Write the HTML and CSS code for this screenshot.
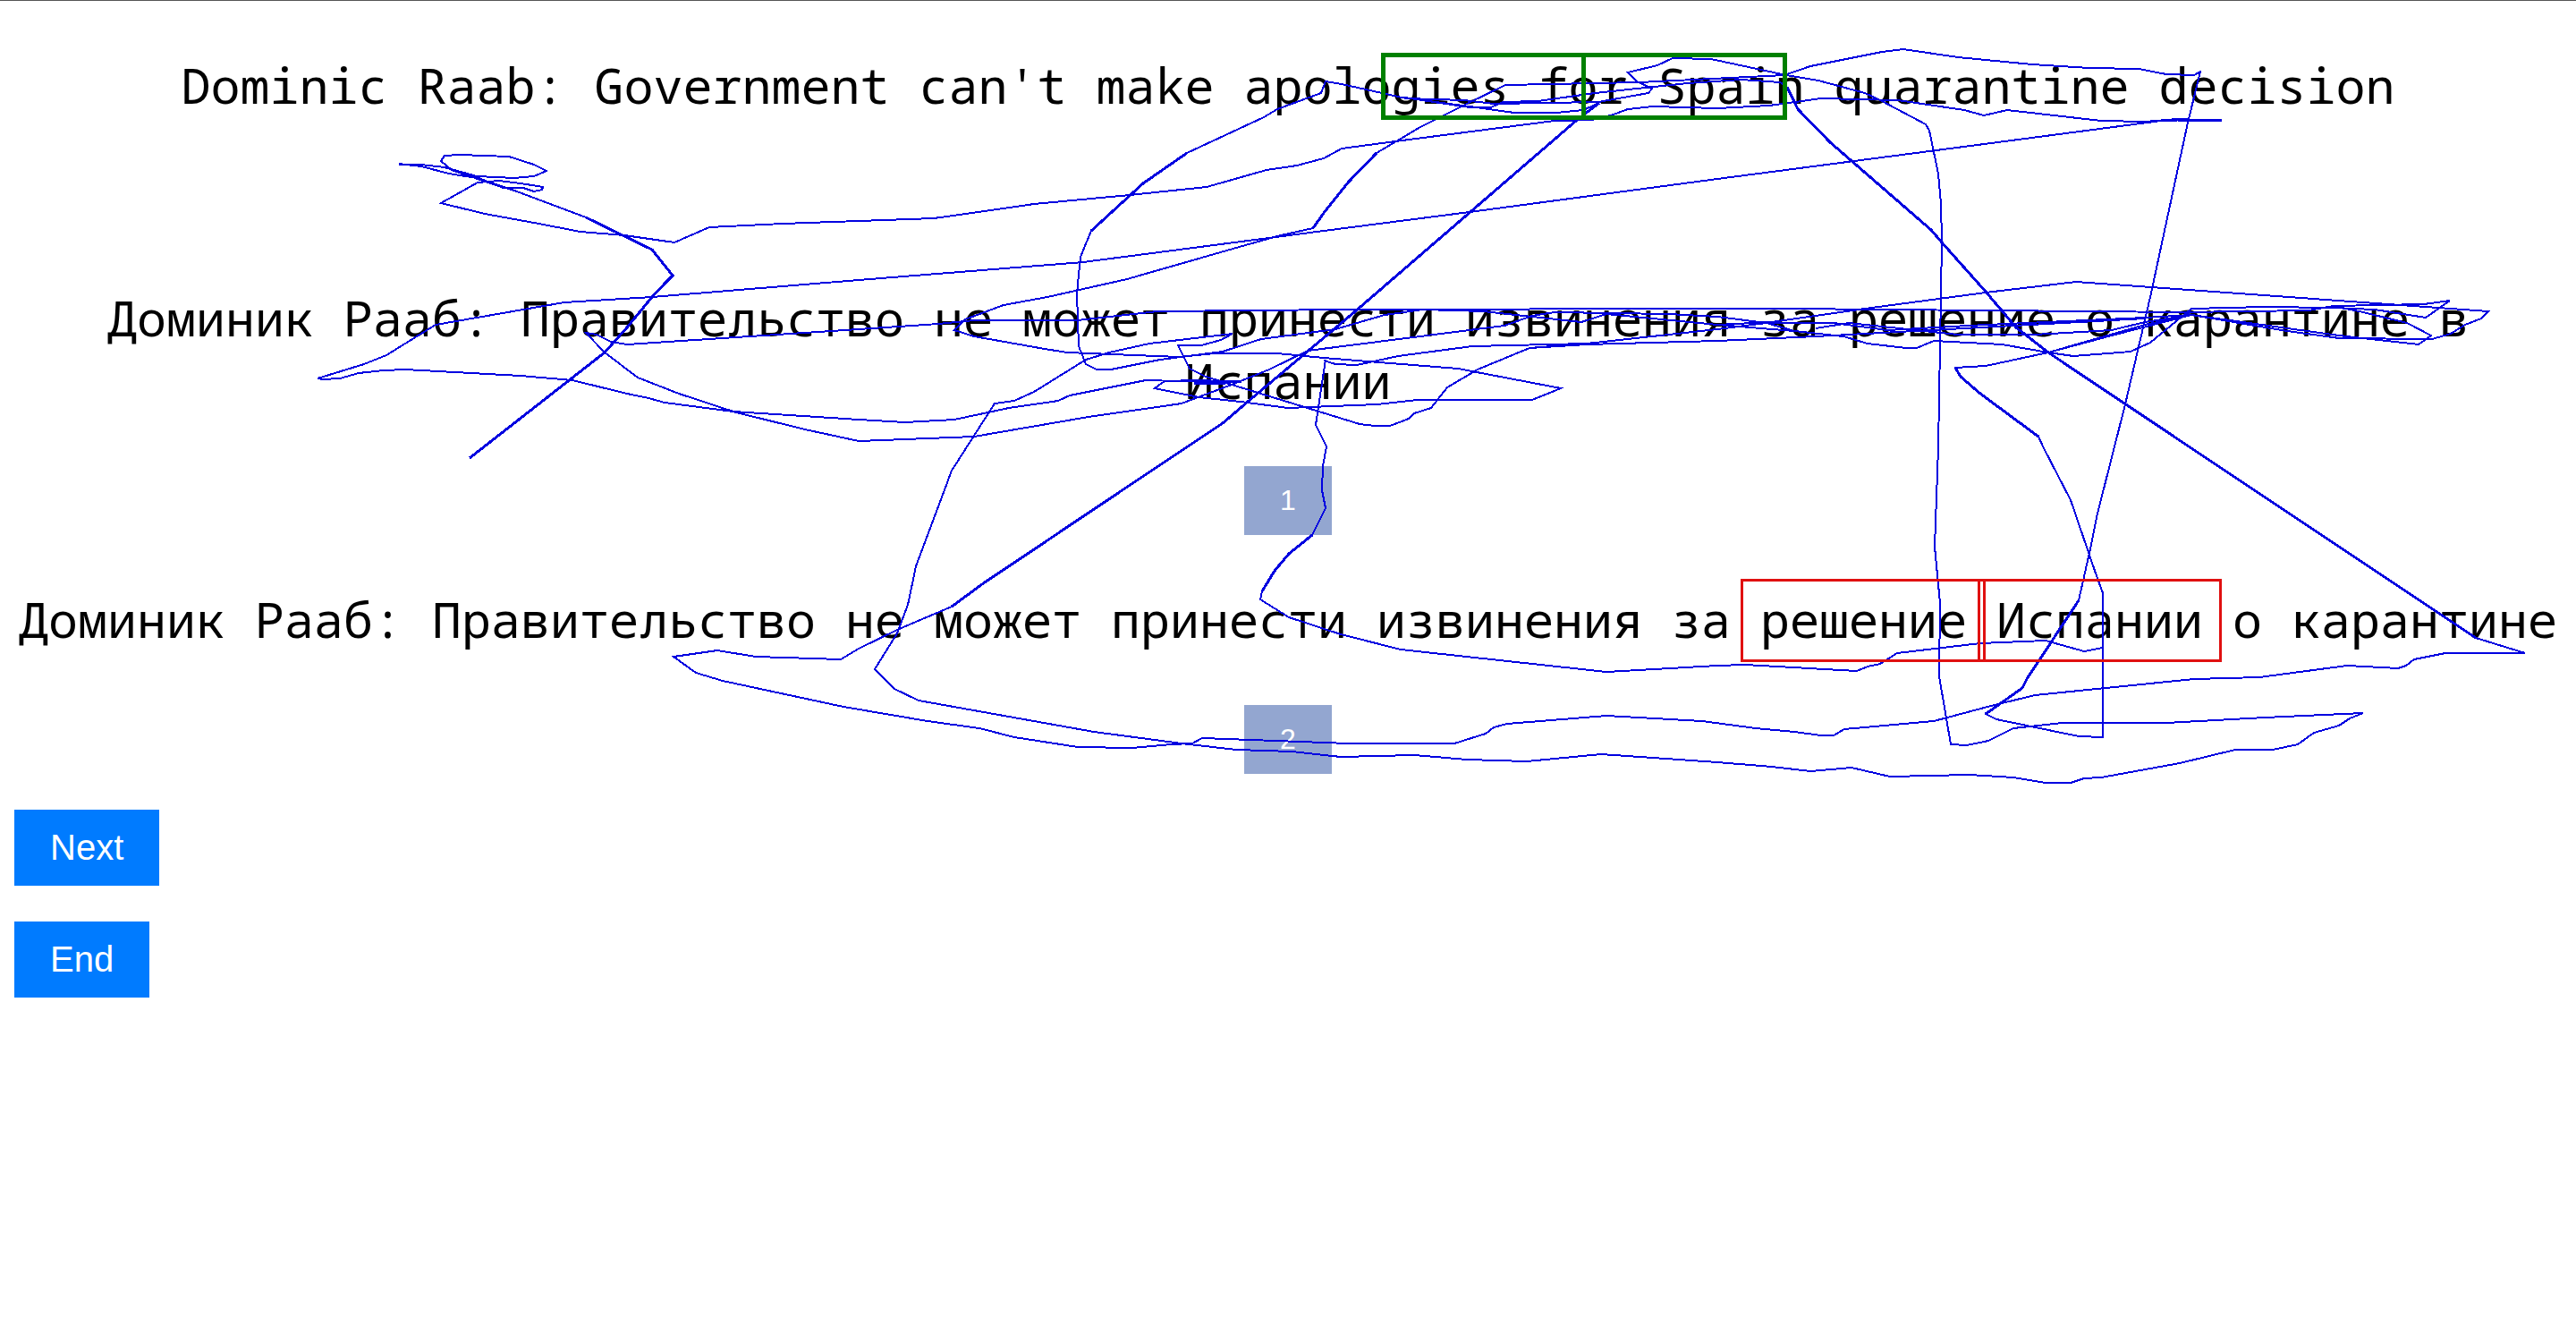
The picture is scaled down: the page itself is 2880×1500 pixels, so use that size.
FILE: index.html
```html
<!DOCTYPE html>
<html lang="en">
<head>
<meta charset="utf-8">
<title>Translation choice</title>
<link rel="stylesheet" href="styles.css">
</head>
<body>
<main class="trial">
  <p class="sentence source">Dominic Raab: Government can't make apologies for Spain quarantine decision</p>
  <p class="sentence" lang="ru">Доминик Рааб: Правительство не может принести извинения за решение о карантине в Испании</p>
  <button class="choice" type="button">1</button>
  <p class="sentence second" lang="ru">Доминик Рааб: Правительство не может принести извинения за решение Испании о карантине</p>
  <button class="choice" type="button">2</button>
  <div class="actions">
    <button class="action" type="button">Next</button>
    <button class="action" type="button">End</button>
  </div>
</main>
<svg class="gaze" viewBox="0 0 2880 1500" aria-hidden="true">
  <g class="trace">
    <!-- first pass over both sentences -->
    <polyline points="446,183 471,183 497,186 533,197 563,209 585,209 597,213 606,211 607,208 582,204 558,201 534,203 493,226 542,238 597,248 649,258 698,262 754,270 793,253 875,249 960,246 1044,243 1101,235 1156,227 1263,217 1349,208 1416,189 1450,184 1480,176 1500,165 1560,157 1738,134 1780,133 1804,127 1820,121 1848,118 1920,120 1978,117 2036,109 2122,111 2196,122 2218,128 2244,122 2349,134 2398,135 2434,132 2484,134 2453,133 2416,134 2226,159 1920,199 1643,236 1480,257 1211,292 960,312 729,331 631,337 487,362 432,396 407,406 355,422 361,423 380,422 401,416 429,413 453,412 582,419 640,424 701,439 725,444 743,449 820,459 960,468 1012,471 1067,468 1128,455 1183,447 1196,441 1281,424 1317,425 1388,426 1302,425 1291,433 1340,443 1387,448 1440,455 1540,451 1584,446 1713,446 1745,433 1630,411 1542,404 1480,399 1428,394 1358,394 1318,398 1193,393 1168,389 1089,375 1067,368 1079,356 1122,340 1171,331 1260,311 1382,276 1428,263 1468,254 1480,237 1508,202 1539,170 1588,141 1640,115 1683,94 1833,91 1995,83 2024,73 2104,57 2128,54 2189,63 2272,71 2336,75 2391,76 2422,82 2453,83 2460,79 2446,136 2404,331 2376,451 2345,573 2336,617 2324,670 2266,758 2261,768 2220,797 2232,803 2324,822 2351,823 2351,662 2342,637 2315,558 2285,500 2279,487 2214,439 2192,420 2186,410 2220,408 2290,393 2361,374 2450,351"/>
    <polyline points="497,186 533,196 575,198 597,196 611,190 597,183 569,174 514,172 497,173 493,179 505,189 563,209"/>
    <!-- second line rereads -->
    <polyline points="2450,351 2440,348 2581,346 2609,341 2710,339 2739,335 2712,354 2655,345 2606,343 2532,342 2450,344 2404,382 2382,392 2318,397 2290,393 2238,384 2162,380 2143,388 2131,388 2088,383 2061,375 2006,369 1975,360 1920,353 1866,350 1738,348 1713,352 1682,363 1462,391 1419,412 1382,427 1321,450 1217,465 1089,487 960,492 900,479 823,460 759,439 713,421 676,393 655,371 667,373 683,381 701,384 960,367 1049,361 1089,357 1205,357 1294,347 1505,345 1920,344 1993,344 2110,345 2220,346 2336,347 2440,348"/>
    <polyline points="1920,362 1981,359 2085,344 2220,326 2321,314 2782,347 2774,355 2756,362 2740,372 2719,378 2615,377 2557,369 2450,351 2398,359 2361,368 2275,373 2189,373 2067,360 2030,366"/>
    <polyline points="2609,341 2642,348 2691,360 2718,374 2704,384 2615,374 2450,351 2398,362 2290,393"/>
    <polyline points="1480,402 1493,406 1517,407 1563,397 1646,386 1774,383 1920,367 1975,360 2050,360 2110,368 2200,363 2398,354 2450,351"/>
    <polyline points="1710,388 1774,384 1920,380 2030,375 2104,371 2398,355"/>
    <polyline points="1378,372 1285,383 1240,393 1214,401 1156,437 1134,447 1112,450 1064,525 1024,632 1015,675 1003,707 978,747 1000,769 1027,782 1223,817 1321,830 1382,837 1444,839 1499,845 1581,843 1640,848 1707,850 1790,842 1920,851 1981,856 2024,861 2070,857 2113,867 2202,865 2251,868 2287,874 2315,874 2330,869 2349,868 2437,852 2499,837 2541,837 2569,831 2587,818 2615,810 2627,802 2642,796 2532,801 2422,807 2306,807 2251,813 2223,827 2199,832 2181,831 2168,755 2169,673 2163,610 2167,500 2171,269 2170,226 2167,193 2157,145 2153,138 2104,112 2085,103 2033,89 1997,83 1913,65 1870,64 1853,72 1820,80 1830,90 1847,98 1843,103 1787,113 1670,115 1637,111 1572,109 1500,93 1482,90 1477,103 1428,121 1413,130 1327,170 1278,204 1220,257 1208,286 1204,327 1206,386 1214,406 1226,412 1242,412 1297,401 1367,392 1410,378 1493,367 1548,351 1591,345 1658,347 1768,359 1796,350 1920,362 2006,369"/>
    <polyline points="1378,372 1365,379 1343,385 1317,385 1330,411 1348,420 1520,473 1537,475 1554,475 1575,467 1581,461 1600,455 1618,432 1652,412 1710,388 1774,383"/>
    <polyline points="1482,401 1471,474 1483,498 1479,520 1478,547 1482,567 1467,597 1441,618 1425,637 1411,660 1409,669 1441,689 1499,708 1566,725 1796,750 1920,743 1951,742 2076,749 2088,744 2102,741 2121,729 2214,718 2287,715 2330,727 2351,723"/>
    <polyline points="1064,677 1003,703 960,724 940,736 845,733 802,726 753,733 778,751 808,760 943,789 1037,805 1095,813 1134,823 1205,834 1266,835 1309,831 1333,830 1344,824 1508,830 1626,830 1661,819 1670,812 1685,808 1796,799 1903,805 1963,813 2006,817 2036,821 2050,821 2062,814 2162,805 2226,788 2275,776 2453,758 2526,756 2624,743 2681,746 2690,743 2699,736 2734,729 2823,729 2768,712"/>
    <polyline points="1998,96 1990,91 1947,88 1887,92 1783,103 1720,112 1680,113 1667,119 1643,119 1570,108 1597,112 1643,118 1693,125 1740,125 1770,122 1788,114"/>
    <polyline points="655,242 575,212 533,198 502,193 471,185 446,182"/>
  </g>
  <!-- fast saccades -->
  <g class="trace fast">
    <polyline points="525,511 676,393 701,365 729,331 744,315 752,307 729,278 655,242"/>
    <polyline points="1788,114 1762,134 1514,348 1395,448 1367,472 1265,540 1098,652 1064,677"/>
    <polyline points="2768,712 2450,500 2290,393 2254,365 2220,325 2171,270 2159,256 2046,158 2010,121 1998,96"/>
    <polyline points="2324,670 2266,758 2261,768 2220,797"/>
    <polyline points="2186,410 2192,420 2214,439 2279,487"/>
    <polyline points="1468,254 1480,237 1508,202 1539,170"/>
    <polyline points="1220,257 1278,204 1327,170"/>
    <polyline points="1467,597 1441,618 1425,637 1411,660"/>
    <polyline points="1320,424 1388,426"/>
    <polyline points="1335,427 1370,427"/>
    <polyline points="2434,133 2484,134"/>
  </g>
  <g class="area source-area">
    <rect x="1546" y="60" width="224" height="70"/>
    <rect x="1770" y="60" width="225" height="70"/>
  </g>
  <g class="area target-area">
    <rect x="1947" y="647" width="271" height="90"/>
    <rect x="2212" y="647" width="270" height="90"/>
  </g>
</svg>
</body>
</html>
```
FILE: styles.css
```css
* {
  box-sizing: border-box;
}

body {
  margin: 0;
  background: #fff;
  color: #000;
  border-top: 1px solid #555;
}

.trial {
  display: flex;
  flex-direction: column;
  align-items: center;
  padding: 59px 16px 40px;
}

.sentence {
  margin: 0;
  font: 55px/70px Consolas, "Noto Sans Mono", "DejaVu Sans Mono", monospace;
  text-align: center;
}

.source {
  margin-bottom: 190px;
}

.second {
  margin-top: 59px;
}

button {
  border: 0;
  padding: 20px 40px;
  color: #fff;
  font-family: "Liberation Sans", Arial, sans-serif;
  cursor: pointer;
}

.choice {
  margin-top: 61px;
  background: #93a6d0;
  font-size: 32px;
  line-height: 37px;
}

.actions {
  display: flex;
  flex-direction: column;
  align-items: flex-start;
  align-self: stretch;
  gap: 40px;
  margin-top: 40px;
}

.action {
  background: #007bff;
  font-size: 40px;
  line-height: 45px;
}

.gaze {
  position: absolute;
  top: 1px;
  left: 0;
  width: 100%;
  pointer-events: none;
  shape-rendering: crispEdges;
}

.trace {
  fill: none;
  stroke: #0000e0;
  stroke-width: 2;
}

.fast {
  stroke-width: 3;
}

.area {
  fill: none;
}

.source-area {
  stroke: #008000;
  stroke-width: 5;
}

.target-area {
  stroke: #e01010;
  stroke-width: 3;
}
```
